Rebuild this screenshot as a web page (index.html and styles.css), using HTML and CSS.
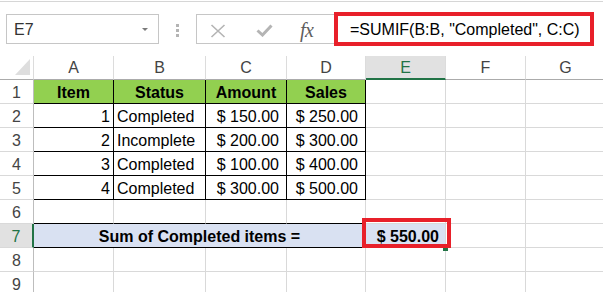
FILE: index.html
```html
<!DOCTYPE html>
<html>
<head>
<meta charset="utf-8">
<link rel="stylesheet" href="styles.css">
</head>
<body>
<div class="topline"></div>
<div class="fbar">
  <div class="namebox"><span class="ref">E7</span><span class="caret"></span></div>
  <div class="grip"><i></i><i></i><i></i></div>
  <div class="fbtns">
    <svg class="ico-x" width="16" height="14" viewBox="0 0 16 14"><path d="M1.5 1 L14.5 13 M14.5 1 L1.5 13" stroke="#b4b4b4" stroke-width="1.6" fill="none"/></svg>
    <svg class="ico-ok" width="17" height="13" viewBox="0 0 17 13"><path d="M1.5 6.5 L6.5 11 L15.5 1.5" stroke="#b4b4b4" stroke-width="3" fill="none"/></svg>
    <span class="fx">fx</span>
  </div>
  <div class="formula">=SUMIF(B:B, "Completed", C:C)</div>
</div>
<div class="sheet">
  <div class="c ch corner"><span class="tri"></span></div>
  <div class="c ch">A</div>
  <div class="c ch">B</div>
  <div class="c ch">C</div>
  <div class="c ch">D</div>
  <div class="c ch sel">E</div>
  <div class="c ch">F</div>
  <div class="c ch">G</div>

  <div class="c rh">1</div>
  <div class="c tb hd">Item</div>
  <div class="c tb hd">Status</div>
  <div class="c tb hd">Amount</div>
  <div class="c tb hd">Sales</div>
  <div class="c"></div><div class="c"></div><div class="c"></div>

  <div class="c rh">2</div>
  <div class="c tb num">1</div>
  <div class="c tb txt">Completed</div>
  <div class="c tb money">$ 150.00</div>
  <div class="c tb money">$ 250.00</div>
  <div class="c"></div><div class="c"></div><div class="c"></div>

  <div class="c rh">3</div>
  <div class="c tb num">2</div>
  <div class="c tb txt">Incomplete</div>
  <div class="c tb money">$ 200.00</div>
  <div class="c tb money">$ 300.00</div>
  <div class="c"></div><div class="c"></div><div class="c"></div>

  <div class="c rh">4</div>
  <div class="c tb num">3</div>
  <div class="c tb txt">Completed</div>
  <div class="c tb money">$ 100.00</div>
  <div class="c tb money">$ 400.00</div>
  <div class="c"></div><div class="c"></div><div class="c"></div>

  <div class="c rh">5</div>
  <div class="c tb num">4</div>
  <div class="c tb txt">Completed</div>
  <div class="c tb money">$ 300.00</div>
  <div class="c tb money">$ 500.00</div>
  <div class="c"></div><div class="c"></div><div class="c"></div>

  <div class="c rh">6</div>
  <div class="c bb"></div><div class="c bb"></div><div class="c bb"></div><div class="c bb"></div>
  <div class="c"></div><div class="c"></div><div class="c"></div>

  <div class="c rh rsel">7</div>
  <div class="c merged">Sum of Completed items =</div>
  <div class="c total">$ 550.00<span class="handle"></span><span class="mark"></span></div>
  <div class="c"></div><div class="c"></div>

  <div class="c rh">8</div>
  <div class="c"></div><div class="c"></div><div class="c"></div><div class="c"></div>
  <div class="c"></div><div class="c"></div><div class="c"></div>

  <div class="c rh">9</div>
  <div class="c"></div><div class="c"></div><div class="c"></div><div class="c"></div>
  <div class="c"></div><div class="c"></div><div class="c"></div>
</div>
</body>
</html>
```
FILE: styles.css
```css
* { box-sizing: border-box; }
body {
  margin: 0;
  background: #fff;
  font-family: "Liberation Sans", Arial, sans-serif;
  font-size: 16px;
  color: #000;
  width: 603px;
  height: 292px;
  overflow: hidden;
}
.topline { height: 1px; margin-top: 1px; background: #d6d6d6; }
.fbar {
  display: flex;
  align-items: center;
  height: 34px;
  margin-top: 10px;
  padding-left: 6px;
}
.namebox {
  width: 153px;
  height: 30px;
  border: 1px solid #c6c6c6;
  display: flex;
  align-items: center;
  justify-content: space-between;
  padding: 2px 10px 0 7px;
  color: #333;
}
.caret {
  width: 0; height: 0;
  border-left: 3px solid transparent;
  border-right: 3px solid transparent;
  border-top: 3px solid #7a7a7a;
  margin-top: -1px;
}
.grip {
  margin-left: 17px;
  width: 3px;
  display: flex;
  flex-direction: column;
  gap: 2px;
  padding-top: 2px;
}
.grip i { display: block; width: 3px; height: 3px; background: #b4b4b4; }
.fbtns {
  margin-left: 17px;
  width: 138px;
  height: 30px;
  border: 1px solid #c6c6c6;
  border-right: none;
  display: flex;
  align-items: center;
  padding: 3px 0 0 13px;
}
.ico-ok { margin-left: 30px; }
.fx {
  margin-left: 27px;
  font-family: "Liberation Serif", serif;
  font-style: italic;
  font-size: 20px;
  color: #5e5e5e;
  letter-spacing: -0.5px;
}
.formula {
  width: 260px;
  height: 34px;
  border: 4px solid #e8202a;
  padding: 2px 0 0 12px;
  line-height: 24px;
  white-space: nowrap;
}
.sheet {
  margin-top: 10px;
  display: grid;
  grid-template-columns: 34px 80px 92px 81px 79px 80px 80px 80px;
  grid-auto-rows: 24px;
}
.c {
  border-right: 1px solid #d9d9d9;
  border-bottom: 1px solid #d9d9d9;
  padding: 2px 3px 0;
  line-height: 21px;
  white-space: nowrap;
}
.ch {
  text-align: center;
  color: #444;
  border-bottom-color: #ababab;
  border-right-color: #dcdcdc;
  padding-top: 1px;
}
.ch.sel {
  background: #e1e1e1;
  color: #217346;
  border-bottom: 2px solid #217346;
}
.corner { position: relative; }
.tri {
  position: absolute;
  left: 15px;
  top: 3px;
  width: 0; height: 0;
  border-left: 15px solid transparent;
  border-bottom: 16px solid #dedede;
}
.rh {
  text-align: center;
  color: #444;
  border-right-color: #bdbdbd;
  padding: 3px 0 0;
  line-height: 20px;
}
.rh.rsel {
  background: #e1e1e1;
  color: #217346;
  border-right: 2px solid #217346;
}
.tb { border-right-color: #000; border-bottom-color: #000; }
.hd { background: #92d050; font-weight: bold; text-align: center; }
.num { text-align: right; padding: 3px 3px 0; line-height: 20px; }
.txt { padding: 3px 3px 0; line-height: 20px; }
.money { text-align: right; padding: 3px 7px 0 3px; line-height: 20px; }
.bb { border-bottom-color: #000; }
.merged {
  grid-column: span 4;
  background: #d9e1f2;
  font-weight: bold;
  text-align: center;
  border-bottom-color: #000;
  border-right-color: #000;
}
.total {
  position: relative;
  background: #d9e1f2;
  font-weight: bold;
  text-align: right;
  padding-right: 6px;
  border-bottom-color: #000;
}
.handle {
  position: absolute;
  left: 77px;
  top: 21px;
  width: 5px;
  height: 6px;
  background: #217346;
  z-index: 1;
}
.mark {
  position: absolute;
  left: -4px;
  top: -6px;
  width: 89px;
  height: 30px;
  border: 4px solid #e8202a;
  z-index: 2;
}
```
